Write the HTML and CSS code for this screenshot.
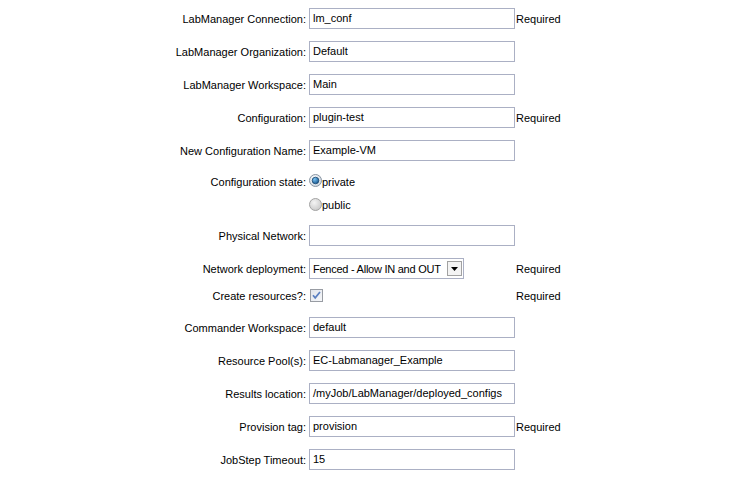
FILE: index.html
```html
<!DOCTYPE html>
<html>
<head>
<meta charset="utf-8">
<link rel="stylesheet" href="styles.css">
</head>
<body>
<div class="form">
  <div class="row h33">
    <div class="label">LabManager Connection:</div>
    <div class="field"><div class="input">lm_conf</div></div>
    <div class="req">Required</div>
  </div>
  <div class="row h33">
    <div class="label">LabManager Organization:</div>
    <div class="field"><div class="input">Default</div></div>
  </div>
  <div class="row h33">
    <div class="label">LabManager Workspace:</div>
    <div class="field"><div class="input">Main</div></div>
  </div>
  <div class="row h33">
    <div class="label">Configuration:</div>
    <div class="field"><div class="input">plugin-test</div></div>
    <div class="req">Required</div>
  </div>
  <div class="row h33">
    <div class="label">New Configuration Name:</div>
    <div class="field"><div class="input">Example-VM</div></div>
  </div>
  <div class="row h29">
    <div class="label">Configuration state:</div>
    <div class="field">
      <svg class="radio" width="13" height="13" viewBox="0 0 13 13">
        <defs>
          <radialGradient id="rg1" cx="0.4" cy="0.35" r="0.7">
            <stop offset="0" stop-color="#ffffff"/>
            <stop offset="1" stop-color="#c9d3dc"/>
          </radialGradient>
          <radialGradient id="dot" cx="0.35" cy="0.3" r="0.7">
            <stop offset="0" stop-color="#7cc4f4"/>
            <stop offset="1" stop-color="#1b5d95"/>
          </radialGradient>
        </defs>
        <circle cx="6.5" cy="6.5" r="6" fill="url(#rg1)" stroke="#8a96a3"/>
        <circle cx="6.5" cy="6.5" r="3.3" fill="url(#dot)" stroke="#17456e" stroke-width="0.8"/>
      </svg><span>private</span>
    </div>
  </div>
  <div class="row h18">
    <div class="label"></div>
    <div class="field">
      <svg class="radio" width="13" height="13" viewBox="0 0 13 13">
        <defs>
          <radialGradient id="rg2" cx="0.4" cy="0.35" r="0.75">
            <stop offset="0" stop-color="#f4f4f4"/>
            <stop offset="1" stop-color="#c4c4c4"/>
          </radialGradient>
        </defs>
        <circle cx="6.5" cy="6.5" r="6" fill="url(#rg2)" stroke="#a3a3a3"/>
      </svg><span>public</span>
    </div>
  </div>
  <div class="row h43">
    <div class="label">Physical Network:</div>
    <div class="field"><div class="input"></div></div>
  </div>
  <div class="row h23">
    <div class="label">Network deployment:</div>
    <div class="field">
      <div class="select">
        <span class="select-text">Fenced - Allow IN and OUT</span>
        <span class="select-btn">
          <svg width="7" height="4" viewBox="0 0 7 4"><path d="M0 0h7L3.5 4z" fill="#000"/></svg>
        </span>
      </div>
    </div>
    <div class="req">Required</div>
  </div>
  <div class="row h31">
    <div class="label">Create resources?:</div>
    <div class="field">
      <svg class="check" width="13" height="13" viewBox="0 0 13 13">
        <defs>
          <linearGradient id="cg" x1="0" y1="0" x2="1" y2="1">
            <stop offset="0" stop-color="#dfe3ea"/>
            <stop offset="1" stop-color="#f7f8fa"/>
          </linearGradient>
        </defs>
        <rect x="0.5" y="0.5" width="12" height="12" fill="url(#cg)" stroke="#989ca3"/>
        <path d="M3 6.3l2.2 2.6L10 3" fill="none" stroke="#5a7fc0" stroke-width="1.7"/>
      </svg>
    </div>
    <div class="req">Required</div>
  </div>
  <div class="row h33">
    <div class="label">Commander Workspace:</div>
    <div class="field"><div class="input">default</div></div>
  </div>
  <div class="row h33">
    <div class="label">Resource Pool(s):</div>
    <div class="field"><div class="input">EC-Labmanager_Example</div></div>
  </div>
  <div class="row h33">
    <div class="label">Results location:</div>
    <div class="field"><div class="input">/myJob/LabManager/deployed_configs</div></div>
  </div>
  <div class="row h33">
    <div class="label">Provision tag:</div>
    <div class="field"><div class="input">provision</div></div>
    <div class="req">Required</div>
  </div>
  <div class="row h33">
    <div class="label">JobStep Timeout:</div>
    <div class="field"><div class="input">15</div></div>
  </div>
</div>
</body>
</html>
```
FILE: styles.css
```css
html, body {
  margin: 0;
  padding: 0;
  background: #ffffff;
}
body {
  font-family: "Liberation Sans", Arial, sans-serif;
  font-size: 11px;
  color: #000;
}
.form {
  padding-top: 2px;
}
.row {
  display: flex;
  align-items: center;
}
.h33 { height: 33px; }
.h29 { height: 29px; }
.h18 { height: 18px; }
.h43 { height: 43px; }
.h23 { height: 23px; }
.h31 { height: 31px; }
.label {
  width: 306px;
  text-align: right;
  white-space: nowrap;
  flex: none;
}
.field {
  width: 207px;
  margin-left: 3px;
  flex: none;
  display: flex;
  align-items: center;
}
.input {
  box-sizing: border-box;
  width: 206px;
  height: 21px;
  border: 1px solid #abb0c4;
  padding: 0 3px;
  line-height: 19px;
  white-space: nowrap;
  overflow: hidden;
}
.req {
  white-space: nowrap;
}
.radio {
  display: block;
  flex: none;
  margin-top: -2px;
}
.check {
  display: block;
  margin-left: 1px;
}
.select {
  box-sizing: border-box;
  width: 155px;
  height: 21px;
  border: 1px solid #abb0c4;
  display: flex;
  align-items: center;
  justify-content: space-between;
  padding: 0 1px 0 3px;
}
.select-text {
  white-space: nowrap;
  overflow: hidden;
  letter-spacing: -0.25px;
}
.select-btn {
  box-sizing: border-box;
  flex: none;
  width: 15px;
  height: 15px;
  border: 1px solid #a2a2a2;
  background: #f4f4f4;
  display: flex;
  align-items: center;
  justify-content: center;
}
.select-btn svg {
  display: block;
}
```
